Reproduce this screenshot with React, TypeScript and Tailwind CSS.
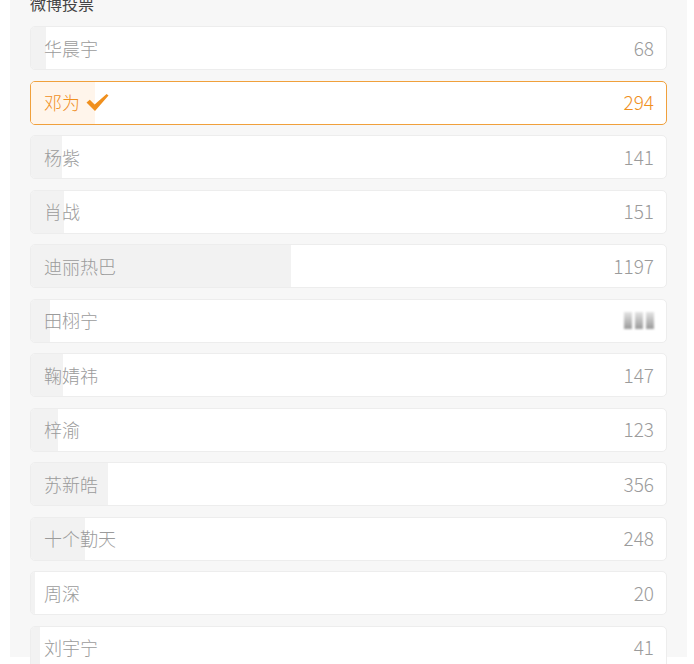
import React from 'react';

interface Option {
  name: string;
  votes: number;
  hidden?: boolean;
}

const options: Option[] = [
  { name: '华晨宇', votes: 68 },
  { name: '邓为', votes: 294 },
  { name: '杨紫', votes: 141 },
  { name: '肖战', votes: 151 },
  { name: '迪丽热巴', votes: 1197 },
  { name: '田栩宁', votes: 88, hidden: true },
  { name: '鞠婧祎', votes: 147 },
  { name: '梓渝', votes: 123 },
  { name: '苏新皓', votes: 356 },
  { name: '十个勤天', votes: 248 },
  { name: '周深', votes: 20 },
  { name: '刘宇宁', votes: 41 },
];

const TOTAL = 2920;
const SELECTED = '邓为';

// chunky tick, thick at the elbow and thinner toward the tip
const Tick = () => (
  <svg width="23" height="19" viewBox="0 0 23 19" className="text-[#f0901e]">
    <path d="M0.5 9.5 L3.8 6.8 L8.6 11.6 L20.6 1 L22.5 2.6 L9 18 Z" fill="currentColor" />
  </svg>
);

const Row: React.FC<{ option: Option }> = ({ option }) => {
  const selected = option.name === SELECTED;
  const pct = (option.votes / TOTAL) * 100;
  const tone = selected ? 'text-[#f0901e]' : 'text-[#9b9b9b]';

  return (
    <div
      className={`relative h-[44px] shrink-0 rounded-[5px] border bg-white overflow-hidden ${
        selected ? 'border-[#f0a03c]' : 'border-[#ededed]'
      }`}
    >
      <div
        className={`absolute left-0 top-0 bottom-0 ${selected ? 'bg-[#fff5eb]' : 'bg-[#f2f2f2]'}`}
        style={{ width: `${pct}%` }}
      />
      <div className="relative flex h-full items-center justify-between pl-[13px] pr-[12px]">
        <div className={`flex items-center gap-[6px] text-[18px] font-light ${tone}`}>
          <span>{option.name}</span>
          {selected && <Tick />}
        </div>
        {option.hidden ? (
          <div className="flex gap-[3px] blur-[0.8px]">
            <span className="h-[17px] w-[8px] bg-gradient-to-b from-[#e4e4e4] to-[#9a9a9a]" />
            <span className="h-[17px] w-[8px] bg-gradient-to-b from-[#e4e4e4] to-[#9a9a9a]" />
            <span className="h-[17px] w-[8px] bg-gradient-to-b from-[#e4e4e4] to-[#9a9a9a]" />
          </div>
        ) : (
          <span className={`text-[19px] font-light ${tone}`}>{option.votes}</span>
        )}
      </div>
    </div>
  );
};

export default function App() {
  return (
    <div
      className="h-[664px] w-[694px] overflow-hidden bg-white"
      style={{ fontFamily: '"Noto Sans CJK SC", "Noto Sans", sans-serif' }}
    >
      <div className="ml-[10px] h-full w-[677px] bg-[#f7f7f7] px-[20px]">
        <div className="-mt-[7px] mb-[13px] h-[20px] text-[16px] leading-[20px] text-[#444]">微博投票</div>
        <div className="flex flex-col gap-[10.5px]">
          {options.map(o => (
            <Row key={o.name} option={o} />
          ))}
        </div>
      </div>
    </div>
  );
}
